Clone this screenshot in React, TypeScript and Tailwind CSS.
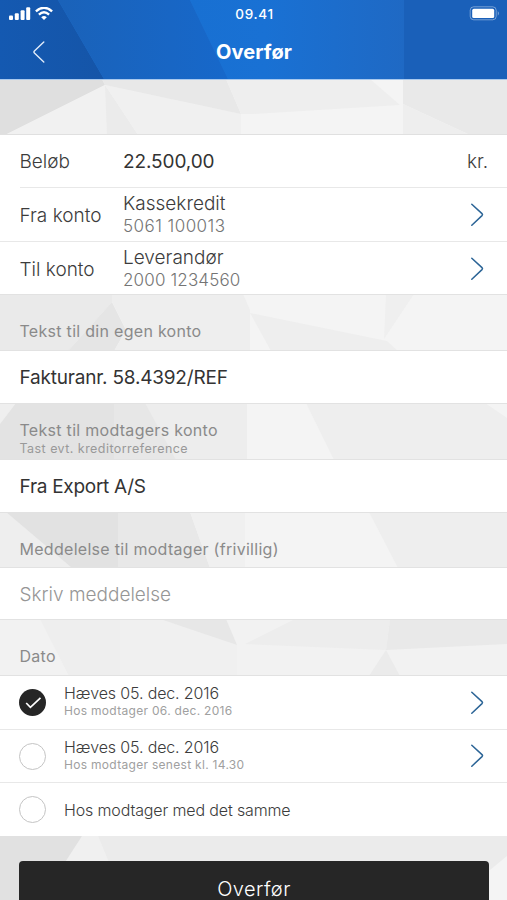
import clsx from "clsx";
import React from "react";

interface Facet {
    points: string;
    fill: string;
}

const HEADER_FACETS: Facet[] = [
    { points: "0,0 58,0 104,79 0,79", fill: "url(#facet-left)" },
    { points: "58,0 190,0 228,79 104,79", fill: "url(#facet-mid)" },
    { points: "190,0 404,0 404,79 228,79", fill: "url(#facet-bright)" },
    { points: "404,0 507,0 507,79 404,79", fill: "#1a60b9" },
];

const PAGE_FACETS: Facet[] = [
    { points: "0,79 102,79 105,85 5,135 0,135", fill: "#dfdfdf" },
    { points: "105,85 5,135 138,135", fill: "#f1f1f1" },
    { points: "105,85 138,135 107,135", fill: "#ebebeb" },
    { points: "105,85 241,114 241,135 138,135", fill: "#f0f0f0" },
    { points: "102,79 226,79 241,114 105,85", fill: "#e8e8e8" },
    { points: "226,79 370,79 400,105 253,114 241,114", fill: "#eeeeee" },
    { points: "370,79 403,79 403,104", fill: "#f4f4f4" },
    { points: "403,79 507,79 507,135 470,135 403,104", fill: "#e9e9e9" },
    { points: "403,104 470,135 403,135", fill: "#eeeeee" },

    { points: "0,294 112,294 112,302 68,351 0,351", fill: "#eaeaea" },
    { points: "112,302 126,330 114,351 68,351", fill: "#e5e5e5" },
    { points: "112,294 243,294 250,310 250,351 114,351 126,330 112,302", fill: "#eeeeee" },
    { points: "250,313 387,341 398,351 271,351", fill: "#eeeeee" },
    { points: "386,294 414,294 384,339", fill: "#efefef" },

    { points: "0,403 16,403 0,424", fill: "#efefef" },
    { points: "16,403 114,403 114,460 0,460 0,424", fill: "#e3e3e3" },
    { points: "114,403 247,403 247,460 114,460", fill: "#ededed" },
    { points: "114,403 145,403 176,460 114,460", fill: "#e7e7e7" },
    { points: "306,403 485,403 507,418 507,460 334,460", fill: "#eeeeee" },

    { points: "0,512 6,512 72,568 0,568", fill: "#eeeeee" },
    { points: "6,512 118,512 118,568 72,568", fill: "#e2e2e2" },
    { points: "118,512 190,512 210,568 118,568", fill: "#e8e8e8" },
    { points: "190,512 245,512 245,568 210,568", fill: "#f0f0f0" },
    { points: "369,512 507,512 507,568 398,568", fill: "#eeeeee" },

    { points: "0,619 507,619 507,676 0,676", fill: "#f2f2f2" },
    { points: "40,619 120,619 120,676 69,676", fill: "#eeeeee" },
    { points: "120,619 160,619 237,645 237,676 120,676", fill: "#f0f0f0" },
    { points: "160,619 226,619 237,645", fill: "#e7e7e7" },
    { points: "295,619 390,619 386,650 245,644", fill: "#ededed" },
    { points: "390,619 507,619 507,644 386,650", fill: "#e9e9e9" },
    { points: "386,650 400,676 369,676", fill: "#ebebeb" },

    { points: "0,836 82,836 56,900 0,900", fill: "#e1e1e1" },
    { points: "82,836 98,836 112,870 60,870", fill: "#f0f0f0" },
    { points: "98,836 507,836 507,856 490,870 112,870", fill: "#ebebeb" },
];

const Facets = ({ items, height, className }: { items: Facet[]; height: number; className: string }) => (
    <svg
        className={clsx("absolute left-0 top-0 w-[507px]", className)}
        viewBox={`0 0 507 ${height}`}
        aria-hidden="true"
    >
        <defs>
            <linearGradient id="facet-left">
                <stop offset="0" stopColor="#1459b1" />
                <stop offset="1" stopColor="#1555a8" />
            </linearGradient>
            <linearGradient id="facet-mid">
                <stop offset="0" stopColor="#1a62b9" />
                <stop offset="1" stopColor="#1768ca" />
            </linearGradient>
            <linearGradient id="facet-bright">
                <stop offset="0" stopColor="#1870d2" />
                <stop offset="0.35" stopColor="#1971d4" />
                <stop offset="1" stopColor="#1f69c4" />
            </linearGradient>
        </defs>
        {items.map((facet) => (
            <polygon key={facet.points} points={facet.points} fill={facet.fill} />
        ))}
    </svg>
);

const Chevron = () => (
    <svg className="h-6 w-4 shrink-0" viewBox="0 0 16 24" fill="none" stroke="#2b6496" strokeWidth="1.5" strokeLinecap="round" strokeLinejoin="round">
        <path d="M2.8 1.2 L13 10.6 Q14 11.6 13 12.6 L2.8 22.2" />
    </svg>
);

const StatusBar = () => (
    <div className="relative flex h-[27px] items-center justify-between pl-[9px] pr-[7px]">
        <div className="flex w-[60px] items-center gap-[4px]">
            <svg className="h-[14px] w-[22px]" viewBox="0 0 22 14" fill="#fff">
                <rect x="0" y="8.6" width="4" height="4.5" rx="1" />
                <rect x="5.8" y="6.2" width="4" height="6.9" rx="1" />
                <rect x="11.6" y="3.2" width="4" height="9.9" rx="1" />
                <rect x="17.2" y="0.2" width="4" height="12.9" rx="1" />
            </svg>
            <svg className="h-[14px] w-[18px]" viewBox="0 0 18 14" fill="none" stroke="#fff" strokeWidth="2.4">
                <path d="M0.9 4.4 Q9 -2.8 17.1 4.4" />
                <path d="M3.9 7.6 Q9 3 14.1 7.6" />
                <path d="M9 13 L6.2 10.2 Q9 8 11.8 10.2 Z" fill="#fff" stroke="none" />
            </svg>
        </div>
        <span className="pt-0.5 text-[13.5px] font-medium leading-none tracking-[0.7px] text-white">09.41</span>
        <div className="flex w-[60px] justify-end">
            <svg className="h-[15px] w-[31px]" viewBox="0 0 31 15" fill="none">
                <rect x="1.2" y="0.8" width="26" height="13" rx="3.5" stroke="#fff" strokeOpacity="0.4" />
                <rect x="3.2" y="2.8" width="22" height="9.2" rx="1.6" fill="#fff" />
                <path d="M28.8 5 Q30.8 7.3 28.8 9.8 Z" fill="#fff" fillOpacity="0.5" />
            </svg>
        </div>
    </div>
);

const Header = () => (
    <header className="relative h-[80px] overflow-hidden border-b border-[#a9c9ee] bg-[#1a6fd0]">
        <Facets items={HEADER_FACETS} height={79} className="h-[79px]" />
        <StatusBar />
        <div className="relative flex h-[50px] items-center px-8">
            <button aria-label="Tilbage">
                <svg className="h-6 w-3.5" viewBox="0 0 14 24" fill="none" stroke="#e2ecfa" strokeWidth="1.4" strokeLinecap="round" strokeLinejoin="round">
                    <path d="M11.8 2 L2.4 11 Q1.4 12 2.4 13 L11.8 22" />
                </svg>
            </button>
            <h1 className="flex-1 pr-[13px] text-center text-[20px] font-bold tracking-[0.05px] text-white">Overfør</h1>
        </div>
    </header>
);

interface AccountRowProps {
    label: string;
    name: string;
    number: string;
    className: string;
    numberClassName: string;
}

const AccountRow = ({ label, name, number, className, numberClassName }: AccountRowProps) => (
    <div className={clsx("flex items-center pl-[19.5px] pr-[22px]", className)}>
        <span className="w-[103.5px] pt-[3px] text-[19px] font-light text-[#3c3c3c]">{label}</span>
        <div className="flex-1">
            <p className="text-[19px] font-light leading-[23px] text-[#3c3c3c]">{name}</p>
            <p className={clsx("text-[17px] font-light leading-[22px] text-[#747474]", numberClassName)}>{number}</p>
        </div>
        <Chevron />
    </div>
);

const SectionLabel = ({ title, hint, className }: { title: string; hint?: string; className: string }) => (
    <div className={clsx("flex flex-col justify-end border-y border-[#e2e2e2] px-[19.5px]", className)}>
        <p className="text-[16px] leading-5 tracking-[0.29px] text-[#8a8a8a]">{title}</p>
        {hint && <p className="pb-[3px] pt-px text-[12.5px] leading-[15px] tracking-[0.45px] text-[#999]">{hint}</p>}
    </div>
);

interface DateOptionProps {
    title: string;
    hint?: string;
    checked?: boolean;
    className: string;
}

const DateOption = ({ title, hint, checked, className }: DateOptionProps) => (
    <div className={clsx("flex items-center bg-white pl-[19px] pr-[22px]", className)}>
        <span
            className={clsx(
                "mr-[18px] flex h-[27px] w-[27px] items-center justify-center rounded-full",
                checked ? "bg-[#262626]" : "border-[1.5px] border-[#c4c4c4]"
            )}
        >
            {checked && (
                <svg className="h-[27px] w-[27px]" viewBox="0 0 27 27" fill="none" stroke="#fff" strokeWidth="1.7">
                    <path d="M7.2 14 L11.4 18.3 L21.5 8.8" />
                </svg>
            )}
        </span>
        <div className={clsx("flex-1", hint ? "pb-[3px]" : "pt-px")}>
            <p className="text-[16px] font-light leading-[19px] tracking-[-0.14px] text-[#3c3c3c]">{title}</p>
            {hint && <p className="text-[12px] leading-[15px] tracking-[0.3px] text-[#a0a0a0]">{hint}</p>}
        </div>
        {hint && <Chevron />}
    </div>
);

export default function App() {
    return (
        <div className="relative h-[900px] w-[507px] overflow-hidden bg-[#f4f4f4] font-['Inter',sans-serif]">
            <Facets items={PAGE_FACETS} height={900} className="h-[900px]" />

            <div className="relative flex flex-col">
                <Header />

                <main>
                    <div className="h-[55px] border-b border-[#e0e0e0]" />

                    <section className="bg-white">
                        <div className="flex h-[53px] items-center pl-[19.5px] pt-0.5">
                            <span className="w-[103.5px] text-[19px] font-light text-[#3c3c3c]">Beløb</span>
                            <span className="flex-1 text-[19px] tracking-[-0.1px] text-[#333]">22.500,00</span>
                            <span className="pr-[19px] text-[19px] font-light text-[#3c3c3c]">kr.</span>
                        </div>
                        <div className="ml-[20px] h-px bg-[#e8e8e8] -mt-px" />
                        <AccountRow
                            label="Fra konto"
                            name="Kassekredit"
                            number="5061 100013"
                            className="h-[54px] border-b border-[#e8e8e8]"
                            numberClassName="tracking-[0.45px]"
                        />
                        <AccountRow
                            label="Til konto"
                            name="Leverandør"
                            number="2000 1234560"
                            className="h-[52px] pt-px"
                            numberClassName="tracking-[0.15px]"
                        />
                    </section>

                    <SectionLabel title="Tekst til din egen konto" className="h-[57px] pb-[9px]" />
                    <div className="flex h-[52px] items-center bg-white px-[19.5px] pt-0.5 text-[19px] tracking-[-0.2px] text-[#333]">
                        Fakturanr. 58.4392/REF
                    </div>

                    <SectionLabel title="Tekst til modtagers konto" hint="Tast evt. kreditorreference" className="h-[57px]" />
                    <div className="flex h-[52px] items-center bg-white px-[19.5px] pt-0.5 text-[19px] tracking-[-0.28px] text-[#333]">
                        Fra Export A/S
                    </div>

                    <SectionLabel title="Meddelelse til modtager (frivillig)" className="h-[56px] pb-2" />
                    <div className="flex h-[51px] items-center bg-white px-[19.5px] pt-[3px] text-[19px] font-light text-[#969696]">
                        Skriv meddelelse
                    </div>

                    <SectionLabel title="Dato" className="h-[57px] pb-[9px]" />
                    <DateOption title="Hæves 05. dec. 2016" hint="Hos modtager 06. dec. 2016" checked className="h-[54px] border-b border-[#e8e8e8]" />
                    <DateOption title="Hæves 05. dec. 2016" hint="Hos modtager senest kl. 14.30" className="h-[53px] border-b border-[#e8e8e8]" />
                    <DateOption title="Hos modtager med det samme" className="h-[53px]" />

                    <button className="mx-[19px] mt-[25px] flex h-[54px] w-[470px] items-center justify-center rounded-[4px] bg-[#262626] pt-px text-[20px] font-light tracking-[0.45px] text-white">
                        Overfør
                    </button>
                </main>
            </div>
        </div>
    );
}
